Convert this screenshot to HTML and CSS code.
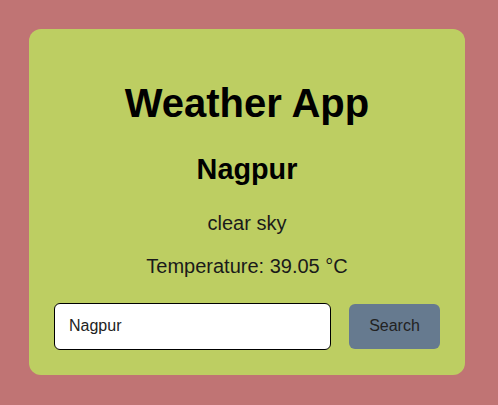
FILE: index.html
```html
<!DOCTYPE html>
<html lang="en">
<head>
<meta charset="utf-8">
<title>Weather App</title>
<link rel="stylesheet" href="styles.css">
</head>
<body>
  <main class="card">
    <h1 class="title">Weather App</h1>
    <h2 class="city">Nagpur</h2>
    <p class="info">clear sky</p>
    <p class="info">Temperature: 39.05 °C</p>
    <div class="search-row">
      <input class="search-input" type="text" value="Nagpur">
      <button class="search-btn" type="button">Search</button>
    </div>
  </main>
</body>
</html>
```

FILE: styles.css
```css
html, body {
  margin: 0;
  padding: 0;
}
body {
  background: #c07474;
  font-family: "Liberation Sans", Arial, sans-serif;
  padding: 29px 33px 30px 29px;
  min-height: 405px;
  box-sizing: border-box;
}
.card {
  background: #bdce62;
  border-radius: 12px;
  padding: 25px;
  width: 436px;
  box-sizing: border-box;
  text-align: center;
}
.title {
  font-size: 40px;
  font-weight: bold;
  color: #000;
  margin: 27px 0;
}
.city {
  font-size: 28.8px;
  font-weight: bold;
  color: #000;
  margin: 24px 0 25.5px;
}
.info {
  font-size: 20px;
  color: #1a1a1a;
  margin: 20px 0;
}
.search-row {
  display: flex;
  align-items: center;
  gap: 18px;
  margin-top: 25px;
}
.search-input {
  flex: 1;
  min-width: 0;
  height: 47px;
  box-sizing: border-box;
  border: 1px solid #000;
  border-radius: 6px;
  padding: 0 14px;
  font-family: "Liberation Sans", Arial, sans-serif;
  font-size: 16px;
  color: #222;
  background: #fff;
}
.search-btn {
  width: 91px;
  height: 45px;
  border: none;
  border-radius: 6px;
  background: #667a8f;
  color: #222;
  font-family: "Liberation Sans", Arial, sans-serif;
  font-size: 16px;
  padding: 0;
}
```
